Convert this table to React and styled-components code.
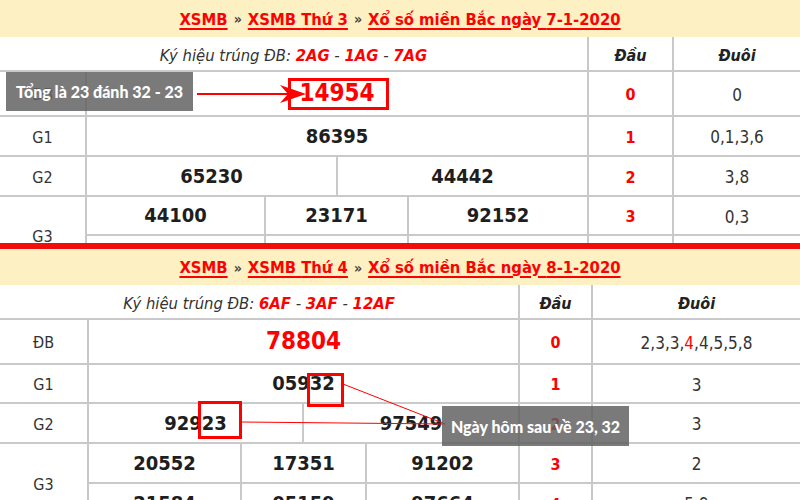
import React from "react";
import styled, { createGlobalStyle } from "styled-components";

const Global = createGlobalStyle`
  html, body { margin: 0; padding: 0; background: #fff; }
  body { width: 800px; height: 500px; overflow: hidden; }
`;

const Page = styled.div`
  position: relative;
  width: 800px;
  height: 500px;
  overflow: hidden;
  background: #fff;
  font-family: "DejaVu Sans Condensed", "DejaVu Sans", sans-serif;
  font-stretch: condensed;
  color: #222;
`;

const Section = styled.section`
  height: ${(p) => p.$height}px;
  overflow: hidden;
`;

const Separator = styled.div`
  height: 6px;
  background: #f20d0d;
`;

const Header = styled.div`
  height: ${(p) => p.$height}px;
  background: #fdf1c3;
  display: flex;
  align-items: center;
  justify-content: center;
  gap: 6px;
  font-size: 16.5px;
  font-weight: bold;
  padding-top: 1px;
  box-sizing: border-box;
`;

const Crumb = styled.span`
  color: #f00;
  text-decoration: underline;
  text-decoration-thickness: 1.5px;
  text-underline-offset: 3px;
`;

const Sep = styled.span`
  color: #444;
  font-size: 14px;
`;

const Grid = styled.div`
  display: grid;
  grid-template-columns: ${(p) => p.$cols};
  grid-template-rows: ${(p) => p.$rows};
  gap: 2px;
  background: #c9c9c9;
`;

const Cell = styled.div`
  background: #fff;
  display: flex;
  align-items: center;
  justify-content: center;
  grid-column: ${(p) => (p.$span ? `span ${p.$span}` : "auto")};
  grid-row: ${(p) => (p.$rowSpan ? `span ${p.$rowSpan}` : "auto")};
  overflow: hidden;
`;

const Symbol = styled(Cell)`
  font-size: 16.5px;
  font-style: italic;
  color: #333;
  white-space: pre;
  padding-top: 4px;
`;

const Code = styled.span`
  color: #f00;
  font-weight: bold;
`;

const ColHead = styled(Cell)`
  font-size: 16px;
  font-weight: bold;
  font-style: italic;
  color: #222;
  padding-top: 4px;
`;

const Label = styled(Cell)`
  font-size: 16px;
  color: #333;
  padding-top: 2px;
`;

const Nums = styled.div`
  display: grid;
  grid-template-columns: ${(p) => p.$cols};
  gap: 2px;
  background: #c9c9c9;
`;

const Num = styled.div`
  background: #fff;
  display: flex;
  align-items: center;
  justify-content: center;
  font-weight: bold;
  font-size: ${(p) => (p.$special ? 24 : 20)}px;
  color: ${(p) => (p.$special ? "#f00" : "#1e1e1e")};
  padding-bottom: 1px;
`;

const Head = styled(Cell)`
  font-size: 16px;
  font-weight: bold;
  color: #f00;
  padding-top: 2px;
`;

const Tail = styled(Cell)`
  font-size: 17px;
  color: #333;
  padding-top: 2px;
`;

const Red = styled.span`
  color: #f00;
`;

const Note = styled.div`
  position: absolute;
  left: ${(p) => p.$x}px;
  top: ${(p) => p.$y}px;
  width: ${(p) => p.$w}px;
  height: ${(p) => p.$h}px;
  background: rgba(96, 96, 96, 0.84);
  color: #fff;
  font-family: "Lato", "Open Sans", sans-serif;
  font-weight: 900;
  font-size: 16px;
  display: flex;
  align-items: center;
  justify-content: center;
  white-space: nowrap;
`;

const Mark = styled.div`
  position: absolute;
  left: ${(p) => p.$x}px;
  top: ${(p) => p.$y}px;
  width: ${(p) => p.$w}px;
  height: ${(p) => p.$h}px;
  border: 3px solid #f00;
  box-sizing: border-box;
`;

const Lines = styled.svg`
  position: absolute;
  left: 0;
  top: 0;
  pointer-events: none;
`;

function ResultTable({ t }) {
  return (
    <Section $height={t.height}>
      <Header $height={t.headerH}>
        <Crumb>XSMB</Crumb>
        <Sep>»</Sep>
        <Crumb>XSMB {t.day}</Crumb>
        <Sep>»</Sep>
        <Crumb>Xổ số miền Bắc ngày {t.date}</Crumb>
      </Header>
      <Grid $cols={t.cols} $rows={t.rows}>
        <Symbol $span={2}>
          {"Ký hiệu trúng ĐB: "}
          <Code>{t.codes[0]}</Code>
          {" - "}
          <Code>{t.codes[1]}</Code>
          {" - "}
          <Code>{t.codes[2]}</Code>
        </Symbol>
        <ColHead>Đầu</ColHead>
        <ColHead>Đuôi</ColHead>

        <Label>ĐB</Label>
        <Nums $cols="1fr">
          <Num $special>{t.db}</Num>
        </Nums>
        <Head>0</Head>
        <Tail>{t.tails[0]}</Tail>

        <Label>G1</Label>
        <Nums $cols="1fr">
          <Num>{t.g1}</Num>
        </Nums>
        <Head>1</Head>
        <Tail>{t.tails[1]}</Tail>

        <Label>G2</Label>
        <Nums $cols={t.g2cols}>
          {t.g2.map((n) => (
            <Num key={n}>{n}</Num>
          ))}
        </Nums>
        <Head>2</Head>
        <Tail>{t.tails[2]}</Tail>

        <Label $rowSpan={2}>G3</Label>
        <Nums $cols={t.g3cols}>
          {t.g3a.map((n) => (
            <Num key={n}>{n}</Num>
          ))}
        </Nums>
        <Head>3</Head>
        <Tail>{t.tails[3]}</Tail>
        <Nums $cols={t.g3cols}>
          {t.g3b.map((n) => (
            <Num key={n}>{n}</Num>
          ))}
        </Nums>
        <Head>4</Head>
        <Tail>{t.tails[4]}</Tail>
      </Grid>
    </Section>
  );
}

const first = {
  height: 243,
  headerH: 37,
  day: "Thứ 3",
  date: "7-1-2020",
  codes: ["2AG", "1AG", "7AG"],
  cols: "85px 500px 83px 1fr",
  rows: "33px 43px 38px 38px 37px 38px",
  g2cols: "1fr 1fr",
  g3cols: "177px 141px 1fr",
  db: "14954",
  g1: "86395",
  g2: ["65230", "44442"],
  g3a: ["44100", "23171", "92152"],
  g3b: ["60318", "52906", "83471"],
  tails: ["0", "0,1,3,6", "3,8", "0,3", "7"],
};

const second = {
  height: 251,
  headerH: 36,
  day: "Thứ 4",
  date: "8-1-2020",
  codes: ["6AF", "3AF", "12AF"],
  cols: "87px 429px 71px 1fr",
  rows: "33px 43px 37px 38px 38px 38px",
  g2cols: "213px 1fr",
  g3cols: "151px 123px 1fr",
  db: "78804",
  g1: "05932",
  g2: ["92923", "97549"],
  g3a: ["20552", "17351", "91202"],
  g3b: ["21584", "05159", "97664"],
  tails: [
    <>
      2,3,3,<Red>4</Red>,4,5,5,8
    </>,
    "3",
    "3",
    "2",
    "5,9",
  ],
};

export default function App() {
  return (
    <Page>
      <Global />
      <ResultTable t={first} />
      <Separator />
      <ResultTable t={second} />

      <Lines width="800" height="500" viewBox="0 0 800 500">
        <line x1="197" y1="94" x2="292" y2="94" stroke="#f00" strokeWidth="2" />
        <polygon points="306,94 280,85 288,94 280,103" fill="#f00" />
        <line x1="343" y1="384" x2="445" y2="424" stroke="#f00" strokeWidth="1" />
        <line x1="241" y1="422" x2="445" y2="424" stroke="#f00" strokeWidth="1" />
      </Lines>

      <Mark $x={288} $y={78} $w={101} $h={32} />
      <Mark $x={307} $y={373} $w={37} $h={34} />
      <Mark $x={198} $y={401} $w={44} $h={38} />

      <Note $x={6} $y={72} $w={187} $h={39}>
        Tổng là 23 đánh 32 - 23
      </Note>
      <Note $x={442} $y={406} $w={187} $h={40}>
        Ngày hôm sau về 23, 32
      </Note>
    </Page>
  );
}
